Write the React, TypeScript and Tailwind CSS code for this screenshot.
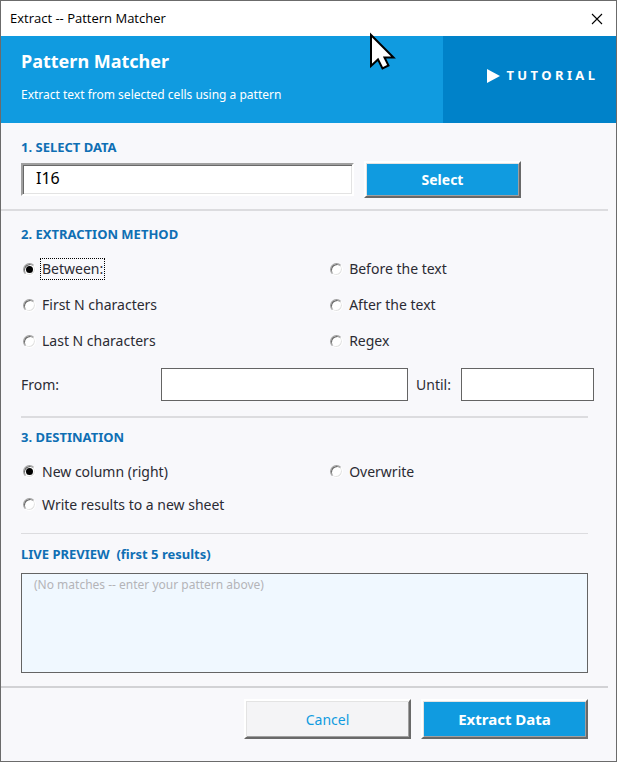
import { useState } from "react";

type Option = { value: string; label: string };

const METHODS: Option[] = [
  { value: "between", label: "Between:" },
  { value: "before", label: "Before the text" },
  { value: "first", label: "First N characters" },
  { value: "after", label: "After the text" },
  { value: "last", label: "Last N characters" },
  { value: "regex", label: "Regex" },
];

const DESTINATIONS: Option[] = [
  { value: "column", label: "New column (right)" },
  { value: "overwrite", label: "Overwrite" },
  { value: "sheet", label: "Write results to a new sheet" },
];

const HEADING = "text-[13px] leading-5 font-bold text-[#0f6fb4]";
const RAISED =
  "border-2 border-t-white border-l-white border-r-[#696969] border-b-[#696969] shadow-[inset_1px_1px_0_#e3e3e3,inset_-1px_-1px_0_#a0a0a0]";

function RadioGrid({
  name,
  options,
  value,
  onChange,
  rowClass,
  focused,
}: {
  name: string;
  options: Option[];
  value: string;
  onChange: (value: string) => void;
  rowClass: string;
  focused?: string;
}) {
  return (
    <div className="grid grid-cols-[13fr_11fr] pr-7" role="radiogroup" aria-label={name}>
      {options.map((option) => (
        <label
          key={option.value}
          className={`flex items-center pl-[2px] text-[14px] leading-5 text-[#2b2b33] ${rowClass}`}
        >
          <input
            type="radio"
            name={name}
            checked={value === option.value}
            onChange={() => onChange(option.value)}
            className="grid size-[13px] shrink-0 appearance-none place-items-center rounded-full border border-t-[#a0a0a0] border-r-white border-b-white border-l-[#a0a0a0] bg-white shadow-[inset_1px_1px_0_#696969,inset_-1px_-1px_0_#e3e3e3] outline-none checked:before:size-[7px] checked:before:rounded-full checked:before:bg-black checked:before:content-['']"
          />
          <span
            className={`ml-1 border border-dotted px-px ${
              focused === option.value ? "border-black" : "border-transparent"
            }`}
          >
            {option.label}
          </span>
        </label>
      ))}
    </div>
  );
}

export default function App() {
  const [method, setMethod] = useState("between");
  const [destination, setDestination] = useState("column");

  return (
    <main className="relative min-h-screen border border-[#6b6b6b] bg-[#f8f8fb] font-['Noto_Sans','DejaVu_Sans',sans-serif]">
      <div className="flex h-[35px] items-center justify-between bg-white pr-[13px] pl-[9px]">
        <h1 className="font-['Open_Sans','Noto_Sans',sans-serif] text-[13px] text-black">
          Extract -- Pattern Matcher
        </h1>
        <button type="button" aria-label="Close">
          <svg width="12" height="12" viewBox="0 0 12 12" className="block">
            <path d="M1 1l10 10M11 1L1 11" stroke="#000" strokeWidth="1.1" />
          </svg>
        </button>
      </div>

      <header className="flex h-[87px] text-white">
        <div className="flex-1 bg-[#109be0] pt-[13px] pl-5">
          <h2 className="text-[18px] leading-6 font-bold">Pattern Matcher</h2>
          <p className="mt-3 text-[12px] leading-5">Extract text from selected cells using a pattern</p>
        </div>
        <button
          type="button"
          className="flex w-[173px] items-center justify-end gap-[6px] bg-[#0082c9] pr-[21px] pb-2 text-[13px] font-bold whitespace-nowrap"
        >
          <svg width="13" height="14" viewBox="0 0 13 14">
            <path d="M0 0v14L13 7z" fill="#fff" />
          </svg>
          T U T O R I A L
        </button>
      </header>

      <section className="pt-[14px] pl-5">
        <label htmlFor="range" className={`block ${HEADING}`}>
          1. SELECT DATA
        </label>
        <div className="mt-1 flex items-center pr-[95px]">
          <input
            id="range"
            type="text"
            defaultValue="I16"
            className="h-[33px] min-w-0 flex-1 border-2 border-t-[#a0a0a0] border-r-white border-b-white border-l-[#a0a0a0] bg-white pb-1 pl-[13px] text-[16px] leading-5 text-black shadow-[inset_1px_1px_0_#696969,inset_-1px_-1px_0_#e3e3e3] outline-none"
          />
          <button
            type="button"
            className={`ml-[10px] h-[37px] w-[157px] bg-[#109be0] text-[14px] font-bold text-white ${RAISED}`}
          >
            Select
          </button>
        </div>
      </section>

      <hr className="mt-[11px] mr-2 h-[2px] border-0 bg-[#dcdcdf]" />

      <section className="pt-[13px] pl-5">
        <h3 className={HEADING}>2. EXTRACTION METHOD</h3>
        <div className="mt-[7px]">
          <RadioGrid
            name="Extraction method"
            options={METHODS}
            value={method}
            onChange={setMethod}
            rowClass="h-9"
            focused="between"
          />
        </div>
        <div className="mt-[9px] flex items-center pr-[22px] text-[14px] text-[#2b2b33]">
          <label htmlFor="from" className="w-[140px]">
            From:
          </label>
          <input
            id="from"
            type="text"
            className="h-[33px] min-w-0 flex-1 border border-[#646464] bg-white px-2 outline-none"
          />
          <label htmlFor="until" className="w-[53px] pl-2">
            Until:
          </label>
          <input
            id="until"
            type="text"
            className="h-[33px] w-[133px] border border-[#646464] bg-white px-2 outline-none"
          />
        </div>
      </section>

      <hr className="mt-[15px] mr-7 ml-5 h-[2px] border-0 bg-[#dcdcdf]" />

      <section className="pt-[9px] pl-5">
        <h3 className={HEADING}>3. DESTINATION</h3>
        <div className="mt-2">
          <RadioGrid
            name="Destination"
            options={DESTINATIONS}
            value={destination}
            onChange={setDestination}
            rowClass="h-[33px]"
          />
        </div>
      </section>

      <hr className="mt-3 mr-7 ml-5 h-px border-0 bg-[#dcdcdf]" />

      <section className="pt-[10px] pr-7 pl-5">
        <label htmlFor="preview" className={`block whitespace-pre ${HEADING}`}>
          {"LIVE PREVIEW  (first 5 results)"}
        </label>
        <textarea
          id="preview"
          readOnly
          value="(No matches -- enter your pattern above)"
          className="mt-[9px] block h-[100px] w-full resize-none border border-[#646464] bg-[#f0f8ff] px-3 pt-px text-[12px] leading-5 text-[#b4b4b8] outline-none"
        />
      </section>

      <hr className="mt-[13px] mr-2 h-[2px] border-0 bg-[#d2d2d5]" />

      <footer className="flex justify-end gap-[10px] pt-[11px] pr-7 pb-[21px]">
        <button
          type="button"
          className={`h-10 w-[167px] bg-[#f4f4f6] text-[14px] text-[#109be0] ${RAISED}`}
        >
          Cancel
        </button>
        <button
          type="button"
          className={`h-10 w-[167px] bg-[#109be0] text-[15px] font-bold text-white ${RAISED}`}
        >
          Extract Data
        </button>
      </footer>

      {/* Mouse pointer resting over the header */}
      <svg
        className="pointer-events-none absolute top-[29px] left-[366px]"
        width="32"
        height="42"
        viewBox="0 0 32 42"
      >
        <path
          d="M4 5V36L11 29.500L15.500 38.500L21.500 35.500L17.500 27.500H26.500z"
          fill="#fff"
          stroke="#000"
          strokeWidth="2"
        />
      </svg>
    </main>
  );
}
